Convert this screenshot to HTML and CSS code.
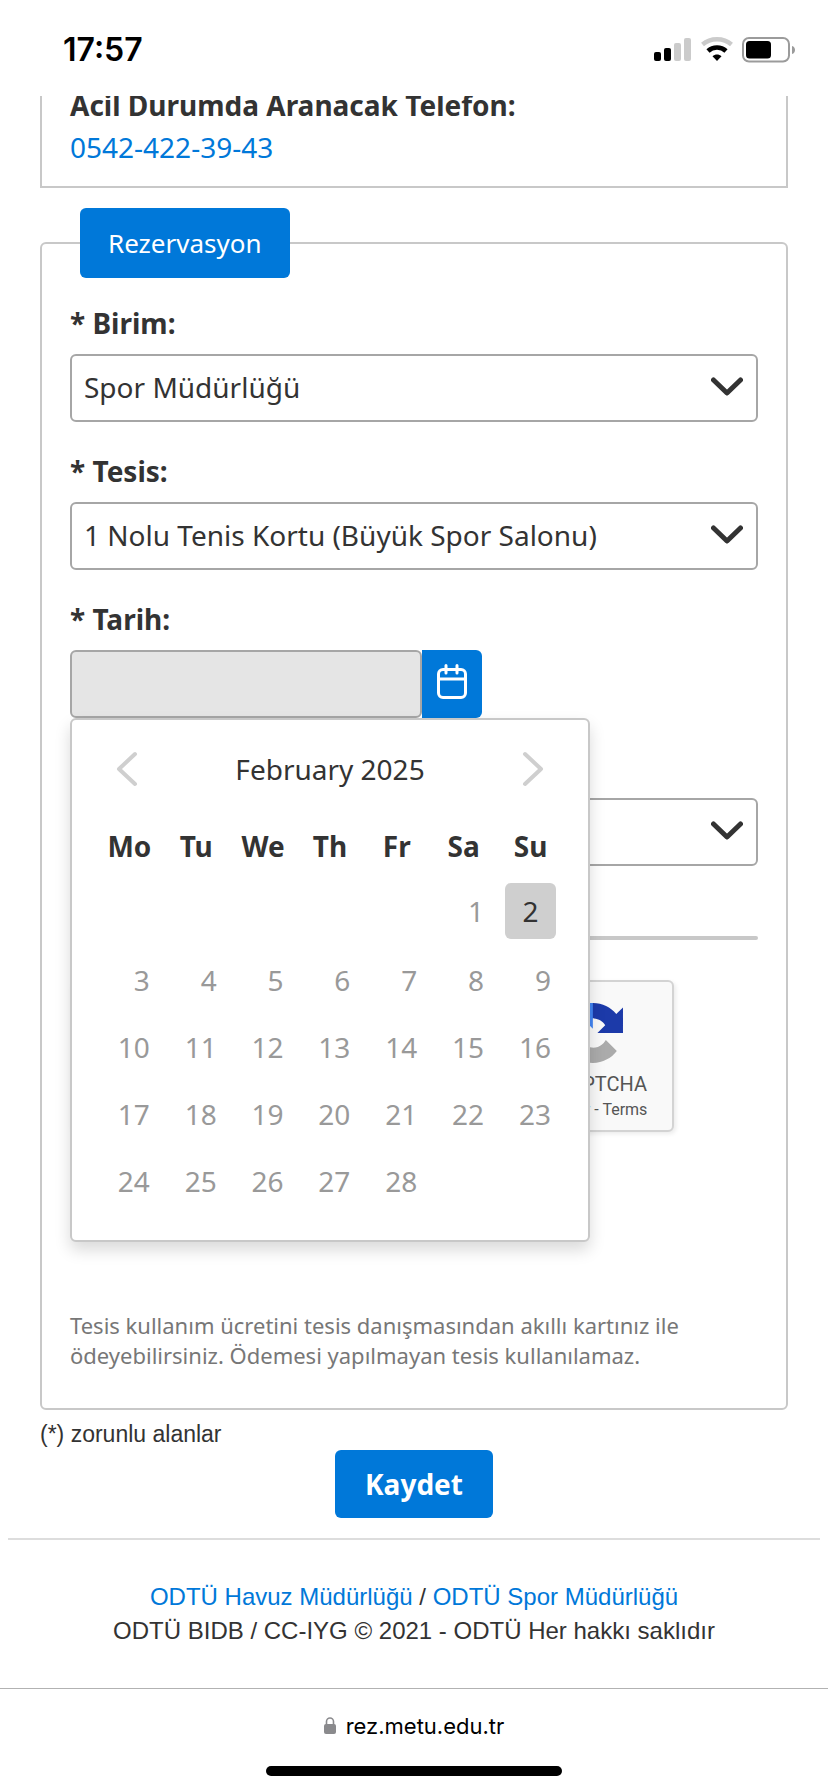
FILE: index.html
```
<!DOCTYPE html>
<html lang="tr">
<head>
    <meta charset="UTF-8">
    <meta name="viewport" content="width=device-width, initial-scale=1.0">
    <title>ODTÜ Rezervasyon</title>
    <link rel="stylesheet" href="styles.css">
</head>
<body>
    <header class="status-bar">
        <span class="clock">17:57</span>
        <div class="status-icons">
            <svg width="38" height="26" viewBox="0 0 38 26">
                <rect x="0" y="15" width="7" height="9" rx="2" fill="#000"/>
                <rect x="10" y="11" width="7" height="13" rx="2" fill="#000"/>
                <rect x="20" y="6" width="7" height="18" rx="2" fill="#cbcbcb"/>
                <rect x="30" y="1" width="7" height="23" rx="2" fill="#cbcbcb"/>
            </svg>
            <svg width="32" height="26" viewBox="0 0 32 26">
                <path d="M1.5 7.5C9.500 0.500 22.500 0.500 30.500 7.500" fill="none" stroke="#cbcbcb" stroke-width="4.400"/>
                <path d="M7 14C12 9.300 20 9.300 25 14" fill="none" stroke="#000" stroke-width="4.600"/>
                <path d="M11.500 19.200C14 17 18 17 20.500 19.200L16 24Z" fill="#000"/>
            </svg>
            <svg width="54" height="26" viewBox="0 0 54 26">
                <rect x="1" y="1" width="46" height="23.500" rx="6" fill="none" stroke="#9b9b9b" stroke-width="2"/>
                <rect x="4" y="4" width="25" height="17.500" rx="3.500" fill="#000"/>
                <path d="M50 9c4 1 4 7 0 8z" fill="#9b9b9b"/>
            </svg>
        </div>
    </header>

    <main>
        <div class="contact-box">
            <strong>Acil Durumda Aranacak Telefon:</strong>
            <a href="tel:05424223943">0542-422-39-43</a>
        </div>

        <form id="rezervasyonForm">
            <fieldset>
                <legend>Rezervasyon</legend>

                <div class="field">
                    <label for="birim">* Birim:</label>
                    <div class="select-box">
                        <select id="birim">
                            <option>Spor Müdürlüğü</option>
                        </select>
                        <svg class="arrow" width="32" height="20" viewBox="0 0 32 20"><path d="M2.500 3L16 16L29.500 3"/></svg>
                    </div>
                </div>

                <div class="field">
                    <label for="tesis">* Tesis:</label>
                    <div class="select-box">
                        <select id="tesis">
                            <option>1 Nolu Tenis Kortu (Büyük Spor Salonu)</option>
                        </select>
                        <svg class="arrow" width="32" height="20" viewBox="0 0 32 20"><path d="M2.500 3L16 16L29.500 3"/></svg>
                    </div>
                </div>

                <div class="field">
                    <label for="tarih">* Tarih:</label>
                    <div class="date-box">
                        <input type="text" id="tarih" readonly>
                        <button type="button" class="date-button" aria-label="Takvim">
                            <svg width="32" height="36" viewBox="0 0 32 36">
                                <rect x="2.500" y="5.500" width="27" height="28" rx="4.500"/>
                                <path d="M2.500 15H29.500M10 1.500V9M21 1.500V9"/>
                            </svg>
                        </button>

                        <div class="datepicker">
                            <div class="datepicker-header">
                                <button type="button" aria-label="Önceki ay">
                                    <svg width="22" height="36" viewBox="0 0 22 36"><path d="M19 3L3 18L19 33"/></svg>
                                </button>
                                <span>February 2025</span>
                                <button type="button" aria-label="Sonraki ay">
                                    <svg width="22" height="36" viewBox="0 0 22 36"><path d="M3 3L19 18L3 33"/></svg>
                                </button>
                            </div>
                            <table>
                                <thead>
                                    <tr><th>Mo</th><th>Tu</th><th>We</th><th>Th</th><th>Fr</th><th>Sa</th><th>Su</th></tr>
                                </thead>
                                <tbody>
                                    <tr class="first-week"><td></td><td></td><td></td><td></td><td></td><td>1</td><td class="today"><button type="button">2</button></td></tr>
                                    <tr><td>3</td><td>4</td><td>5</td><td>6</td><td>7</td><td>8</td><td>9</td></tr>
                                    <tr><td>10</td><td>11</td><td>12</td><td>13</td><td>14</td><td>15</td><td>16</td></tr>
                                    <tr><td>17</td><td>18</td><td>19</td><td>20</td><td>21</td><td>22</td><td>23</td></tr>
                                    <tr><td>24</td><td>25</td><td>26</td><td>27</td><td>28</td><td></td><td></td></tr>
                                </tbody>
                            </table>
                        </div>
                    </div>
                </div>

                <div class="field">
                    <label for="seans">* Seans:</label>
                    <div class="select-box">
                        <select id="seans">
                            <option></option>
                        </select>
                        <svg class="arrow" width="32" height="20" viewBox="0 0 32 20"><path d="M2.500 3L16 16L29.500 3"/></svg>
                    </div>
                </div>

                <hr class="divider">

                <div class="captcha">
                    <div class="captcha-brand">
                        <svg width="60" height="60" viewBox="0 0 64 64">
                            <path fill="#1c3aa9" d="M64 31.955l-.033-1.370V4.687l-7.160 7.160C50.948 4.674 42.033.093 32.050.093c-10.400 0-19.622 4.960-25.458 12.640l11.736 11.860a15.550 15.550 0 0 1 4.754-5.334c2.050-1.600 4.952-2.906 8.968-2.906.485 0 .860.057 1.135.163 4.976.393 9.288 3.140 11.828 7.124l-8.307 8.307L64 31.953"/>
                            <path fill="#4285f4" d="M31.862.094l-1.370.033H4.594l7.160 7.160C4.580 13.147 0 22.060 0 32.046c0 10.400 4.960 19.622 12.640 25.458L24.500 45.768a15.550 15.550 0 0 1-5.334-4.754c-1.600-2.050-2.906-4.952-2.906-8.968 0-.485.057-.860.163-1.135.393-4.976 3.140-9.288 7.124-11.828l8.307 8.307L31.860.095"/>
                            <path fill="#ababab" d="M.001 32.045l.033 1.370v25.898l7.160-7.160c5.860 7.173 14.774 11.754 24.760 11.754 10.400 0 19.622-4.960 25.458-12.640l-11.736-11.860a15.550 15.550 0 0 1-4.754 5.334c-2.050 1.600-4.952 2.906-8.968 2.906-.485 0-.860-.057-1.135-.163-4.976-.393-9.288-3.140-11.828-7.124l8.307-8.307c-10.522.040-22.400.066-27.295-.005"/>
                        </svg>
                        <span class="captcha-name">reCAPTCHA</span>
                        <span class="captcha-links"><a href="#">Privacy</a> - <a href="#">Terms</a></span>
                    </div>
                </div>

                <p class="note">Tesis kullanım ücretini tesis danışmasından akıllı kartınız ile ödeyebilirsiniz. Ödemesi yapılmayan tesis kullanılamaz.</p>
            </fieldset>

            <p class="required-note">(*) zorunlu alanlar</p>
            <button type="submit" class="save-button">Kaydet</button>
        </form>
    </main>

    <footer>
        <p><a href="#">ODTÜ Havuz Müdürlüğü</a> / <a href="#">ODTÜ Spor Müdürlüğü</a></p>
        <p>ODTÜ BIDB / CC-IYG © 2021 - ODTÜ Her hakkı saklıdır</p>
    </footer>

    <div class="browser-bar">
        <div class="address">
            <svg width="12" height="18" viewBox="0 0 12 18">
                <rect x="0" y="7" width="12" height="10" rx="2" fill="#8a8a8d"/>
                <path d="M2.500 8V4.500a3.500 3.500 0 0 1 7 0V8" fill="none" stroke="#8a8a8d" stroke-width="1.600"/>
            </svg>
            <span>rez.metu.edu.tr</span>
        </div>
        <div class="home-indicator"></div>
    </div>
</body>
</html>
```
FILE: styles.css
```
* {
    margin: 0;
    padding: 0;
    box-sizing: border-box;
}

body {
    font-family: "Noto Sans", sans-serif;
    font-size: 28px;
    line-height: 42px;
    color: #333;
    background-color: #fff;
}

a {
    color: #0078d9;
    text-decoration: none;
}

button, input, select {
    font: inherit;
    color: inherit;
    border: none;
    background: none;
}

button {
    cursor: pointer;
}

svg {
    display: block;
}

.status-bar {
    display: flex;
    justify-content: space-between;
    align-items: center;
    height: 96px;
    padding: 4px 32px 0 63px;
}

.clock {
    font-family: Inter, sans-serif;
    font-size: 32px;
    font-weight: 600;
    color: #000;
}

.status-icons {
    display: flex;
    gap: 9px;
}

/* the page is scrolled, so the first box is cut by the status bar */
main {
    padding: 0 40px;
    overflow: hidden;
}

.contact-box {
    display: flex;
    flex-direction: column;
    margin-top: -12px;
    padding: 0 28px 18px;
    border: 2px solid #c8c8c8;
    border-top: none;
}

fieldset {
    min-width: 0;
    margin-top: 20px;
    padding: 24px 28px 38px;
    border: 2px solid #c8c8c8;
    border-radius: 6px;
}

legend {
    margin-left: 10px;
    padding: 14px 28px;
    background-color: #0078d9;
    border-radius: 6px;
    color: white;
    font-size: 26px;
}

.field {
    margin-bottom: 28px;
}

.field label {
    display: block;
    margin-bottom: 10px;
    font-weight: bold;
}

.select-box {
    position: relative;
}

.select-box select {
    display: block;
    width: 100%;
    height: 68px;
    padding: 0 60px 2px 12px;
    border: 2px solid #a6a6a6;
    border-radius: 6px;
    background-color: white;
    appearance: none;
}

.arrow {
    position: absolute;
    top: 23px;
    right: 15px;
    fill: none;
    stroke: #333;
    stroke-width: 5;
    stroke-linecap: round;
    stroke-linejoin: round;
    pointer-events: none;
}

.date-box {
    position: relative;
    display: flex;
}

.date-box input {
    width: 352px;
    height: 68px;
    padding: 0 12px;
    border: 2px solid #a6a6a6;
    border-radius: 6px;
    background-color: #e5e5e5;
}

.date-button {
    display: flex;
    justify-content: center;
    width: 60px;
    height: 68px;
    padding-top: 14px;
    background-color: #0078d9;
    border-radius: 0 6px 6px 0;
}

.date-button svg {
    fill: none;
    stroke: white;
    stroke-width: 3;
    stroke-linecap: round;
}

.datepicker {
    position: absolute;
    z-index: 10;
    top: 100%;
    left: 0;
    width: 520px;
    padding: 24px 24px 26px;
    border: 2px solid #c8c8c8;
    border-radius: 6px;
    background-color: white;
    box-shadow: 0 8px 16px rgba(0, 0, 0, 0.15);
}

.datepicker-header {
    display: flex;
    justify-content: space-between;
    align-items: center;
    height: 50px;
    margin-bottom: 22px;
    padding: 0 20px;
}

.datepicker-header svg {
    fill: none;
    stroke: #cfcfcf;
    stroke-width: 4;
    stroke-linecap: round;
    stroke-linejoin: round;
}

.datepicker table {
    width: 100%;
    table-layout: fixed;
    border-collapse: collapse;
}

.datepicker th {
    height: 60px;
}

.datepicker td {
    height: 67px;
    padding-right: 13px;
    text-align: right;
    color: #999;
}

.datepicker .first-week td {
    height: 70px;
}

.datepicker .today {
    padding: 0 8px;
}

.today button {
    display: block;
    width: 100%;
    height: 56px;
    border-radius: 6px;
    background-color: #cfcfcf;
    color: #333;
}

.divider {
    height: 4px;
    margin: 70px 0 40px;
    border: none;
    border-radius: 2px;
    background-color: #c8c8c8;
}

.captcha {
    display: flex;
    justify-content: flex-end;
    max-width: 604px;
    height: 152px;
    margin-bottom: 178px;
    border: 2px solid #d3d3d3;
    border-radius: 6px;
    background-color: #f9f9f9;
    box-shadow: 2px 2px 4px rgba(0, 0, 0, 0.08);
}

.captcha-brand {
    display: flex;
    flex-direction: column;
    align-items: center;
    width: 158px;
    padding-top: 21px;
    font-family: Roboto, sans-serif;
    color: #555;
}

.captcha-name {
    margin-top: 8px;
    font-size: 20px;
    line-height: 26px;
}

.captcha-links {
    font-size: 16px;
    line-height: 26px;
}

.captcha-links a {
    color: #555;
}

.note {
    font-size: 22px;
    line-height: 30px;
    color: #777;
}

.required-note {
    margin-top: 8px;
    font-family: "Liberation Sans", Arial, sans-serif;
    font-size: 23px;
    line-height: 32px;
}

.save-button {
    display: block;
    height: 68px;
    margin: 0 auto;
    padding: 0 30px;
    border-radius: 6px;
    background-color: #0078d9;
    color: white;
    font-weight: bold;
}

footer {
    margin: 20px 8px 0;
    padding: 40px 0;
    border-top: 2px solid #ddd;
    text-align: center;
    font-family: "Liberation Sans", Arial, sans-serif;
    font-size: 24px;
    line-height: 34px;
}

.browser-bar {
    display: flex;
    flex-direction: column;
    align-items: center;
    gap: 23px;
    padding: 20px 0 16px;
    border-top: 1px solid #b2b2b2;
}

.address {
    display: flex;
    align-items: center;
    gap: 10px;
    font-family: Inter, sans-serif;
    font-size: 22px;
    line-height: 34px;
    color: #000;
}

.home-indicator {
    width: 296px;
    height: 10px;
    border-radius: 5px;
    background-color: #000;
}
```
